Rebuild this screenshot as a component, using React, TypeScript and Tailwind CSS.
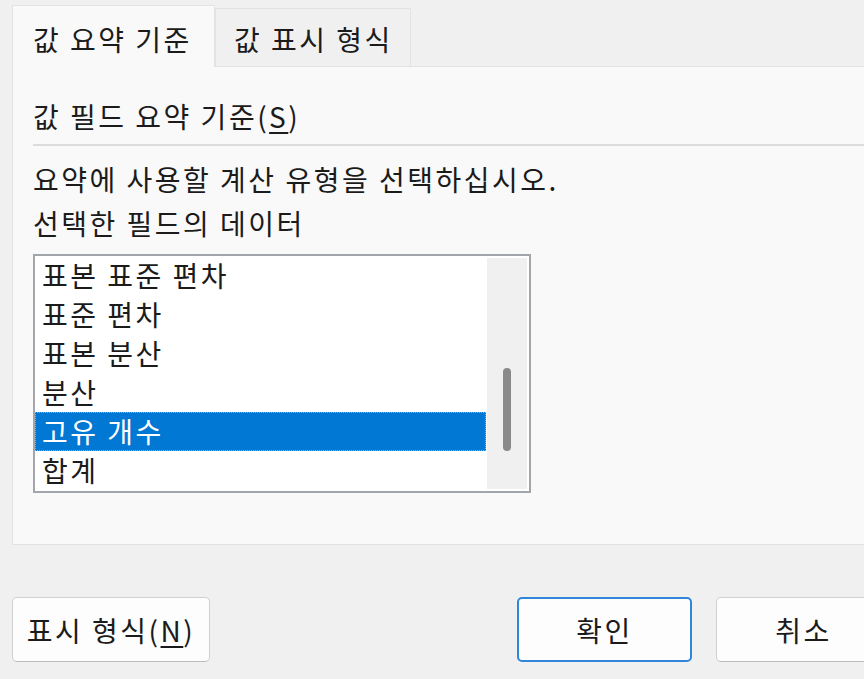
import React from 'react';

const rows = ['표본 표준 편차', '표준 편차', '표본 분산', '분산', '고유 개수', '합계'];

export default function App() {
  return (
    <div
      className="w-[864px] h-[679px] overflow-hidden bg-[#f0f0f0] text-[#1b1b1b] text-[28px] tracking-[2.5px]"
      style={{ fontFamily: '"Noto Sans CJK KR", "Noto Sans", sans-serif' }}
    >
      {/* Tabs */}
      <div className="flex items-end h-[66px] pl-[12px]">
        <div className="relative z-10 -mb-px h-[62px] w-[203px] border border-b-0 border-[#e3e3e3] bg-[#f9f9f9] pl-[20px] pt-[11px] leading-[44px]">
          값 요약 기준
        </div>
        <div className="h-[58px] w-[196px] border border-b-0 border-[#e3e3e3] bg-[#f0f0f0] pl-[18px] pt-[8px] leading-[44px]">
          값 표시 형식
        </div>
      </div>

      {/* Panel */}
      <div className="ml-[12px] w-[900px] h-[479px] border border-[#e3e3e3] bg-[#f9f9f9] pl-[20px]">
        <div className="pt-[27px] leading-[44px] pb-[6px] border-b-2 border-[#dcdcdc]">
          값 필드 요약 기준(<span className="underline underline-offset-4">S</span>)
        </div>
        <div className="mt-[11px] leading-[44px]">요약에 사용할 계산 유형을 선택하십시오.</div>
        <div className="leading-[44px]">선택한 필드의 데이터</div>

        {/* List box */}
        <div className="mt-[9px] flex w-[498px] h-[239px] border-2 border-[#a2a5aa] bg-white">
          <div className="flex-1 flex flex-col">
            {rows.map((r) => (
              <div
                key={r}
                className={
                  r === '고유 개수'
                    ? 'h-[39px] leading-[37px] pl-[6px] bg-[#0078d4] text-white border border-dotted border-[#e8a050]'
                    : 'h-[39px] leading-[39px] pl-[7px]'
                }
              >
                {r}
              </div>
            ))}
          </div>
          <div className="w-[40px] my-[2px] mr-[2px] ml-[1px] bg-[#f0f0f0] flex justify-center pt-[110px]">
            <div className="w-[8px] h-[83px] rounded-full bg-[#8a8a8a]" />
          </div>
        </div>
      </div>

      {/* Buttons */}
      <div className="mt-[52px] flex pl-[12px]">
        <button className="w-[198px] h-[65px] rounded-[5px] border border-[#d0d0d0] border-b-[#bcbcbc] bg-[#fdfdfd] tracking-[2.5px]">
          표시 형식(<span className="underline underline-offset-4">N</span>)
        </button>
        <div className="ml-auto -mr-[27px] flex gap-[24px]">
          <button className="w-[175px] h-[65px] rounded-[5px] border-2 border-[#2f86da] bg-[#fdfdfd] tracking-[2.5px]">
            확인
          </button>
          <button className="w-[175px] h-[65px] rounded-[5px] border border-[#d0d0d0] border-b-[#bcbcbc] bg-[#fdfdfd] tracking-[2.5px]">
            취소
          </button>
        </div>
      </div>
    </div>
  );
}
